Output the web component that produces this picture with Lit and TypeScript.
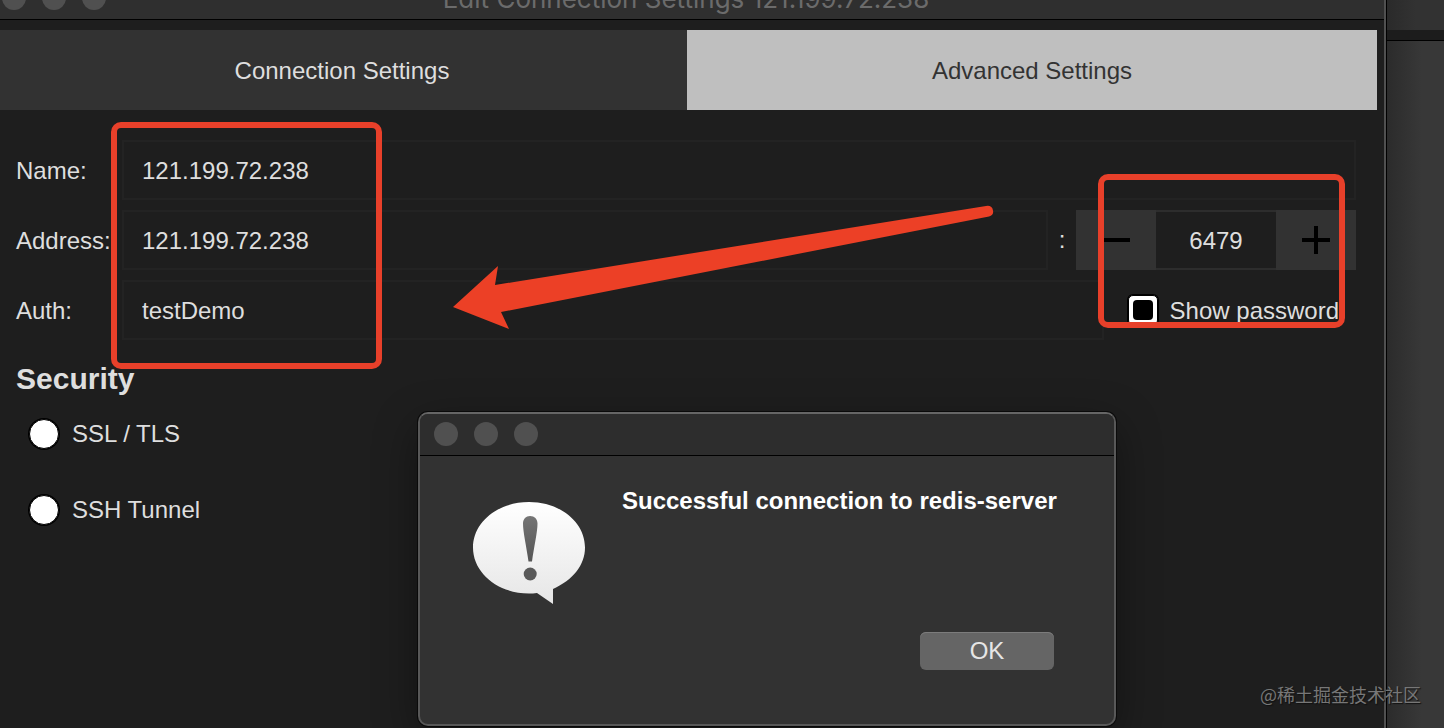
import { LitElement, html, css } from "lit";
import { customElement, property, state } from "lit/decorators.js";

@customElement("window-dots")
export class WindowDots extends LitElement {
  static styles = css`
    :host {
      display: flex;
      gap: 16px;
    }
    .dot {
      width: 24px;
      height: 24px;
      border-radius: 50%;
      background: #505050;
    }
  `;

  render() {
    return html`<span class="dot"></span><span class="dot"></span><span class="dot"></span>`;
  }
}

@customElement("message-dialog")
export class MessageDialog extends LitElement {
  @property() message = "";

  static styles = css`
    :host {
      display: block;
      box-sizing: border-box;
      border: 2px solid #585858;
      border-top-color: #666;
      border-radius: 10px;
      background: #323232;
      box-shadow: 0 0 0 1px #0a0a0a, 0 14px 44px rgba(0, 0, 0, 0.4);
      overflow: hidden;
    }
    .bar {
      display: flex;
      align-items: center;
      height: 40px;
      padding: 0 14px 1px;
      background: #2d2d2d;
      border-bottom: 1px solid #000;
    }
    .body {
      display: flex;
      gap: 36px;
      padding: 30px 60px 54px 52px;
    }
    .icon {
      flex: none;
      width: 114px;
      height: 104px;
      margin-top: 15px;
    }
    .content {
      flex: 1;
      min-width: 0;
      display: flex;
      flex-direction: column;
      justify-content: space-between;
      align-items: flex-end;
      height: 184px;
    }
    .message {
      align-self: flex-start;
      margin: 0;
      font-size: 24px;
      line-height: 30px;
      font-weight: 700;
      color: #fff;
      white-space: nowrap;
    }
    .ok {
      width: 134px;
      height: 38px;
      padding: 0;
      border: 0;
      border-radius: 6px;
      background: #656565;
      box-shadow: inset 0 1px 0 #7c7c7c;
      color: #e6e6e6;
      font: inherit;
      font-size: 24px;
    }
  `;

  render() {
    return html`
      <div class="bar"><window-dots></window-dots></div>
      <div class="body">
        <svg class="icon" viewBox="0 0 114 104" aria-hidden="true">
          <defs>
            <linearGradient id="bubble" x1="0" y1="0" x2="0" y2="1">
              <stop offset="0" stop-color="#ffffff" />
              <stop offset="1" stop-color="#e6e6e6" />
            </linearGradient>
            <linearGradient id="mark" x1="0" y1="0" x2="0" y2="1">
              <stop offset="0" stop-color="#757575" />
              <stop offset="1" stop-color="#555555" />
            </linearGradient>
          </defs>
          <path
            fill="url(#bubble)"
            d="M57 1C88 1 113 21 113 46.500C113 64 101 79 81 88V103L65 92C62 92.500 60 92.500 57 92.500C26 92.500 1 72 1 46.500C1 21 26 1 57 1Z"
          />
          <path
            fill="url(#mark)"
            d="M58 15C62.500 15 65.500 18 65.500 22.500C65.500 31 62 46 60 60.500H56.500C54.500 46 51 31 51 22.500C51 18 54 15 58 15Z"
          />
          <circle cx="58.200" cy="73" r="6.500" fill="#5a5a5a" />
        </svg>
        <div class="content">
          <p class="message">${this.message}</p>
          <button class="ok" type="button">OK</button>
        </div>
      </div>
    `;
  }
}

@customElement("app-root")
export class AppRoot extends LitElement {
  @state() private host = "121.199.72.238";
  @state() private port = 6479;

  static styles = css`
    :host {
      position: relative;
      display: grid;
      grid-template-columns: 1fr 58px;
      min-height: 100vh;
      overflow: hidden;
      background: #1e1e1e;
      color: #dedede;
      font-family: "Liberation Sans", Arial, sans-serif;
      font-size: 24px;
      line-height: 30px;
    }
    .window {
      box-sizing: border-box;
      border-right: 2px solid #505050;
      box-shadow: 1px 0 0 #000;
      z-index: 1;
      min-width: 0;
    }
    .titlebar {
      display: grid;
      grid-template-columns: 1fr auto 1fr;
      grid-template-rows: 19px;
      align-items: end;
      padding: 0 14px 0 2px;
      border-bottom: 1px solid #000;
      background: #2f2f2f;
      overflow: hidden;
    }
    .titlebar window-dots {
      padding-bottom: 9px;
    }
    .title {
      margin: 0;
      padding-bottom: 4px;
      font-family: Inter, sans-serif;
      font-size: 26px;
      line-height: 32px;
      font-weight: 400;
      color: #6b6b6b;
      white-space: nowrap;
    }
    .tabs {
      display: grid;
      grid-template-columns: 1fr 1fr;
      margin: 10px 7px 0 -3px;
    }
    .tab {
      height: 80px;
      padding: 2px 0 0;
      border: 0;
      background: #bfbfbf;
      color: #333;
      font: inherit;
    }
    .tab[aria-selected="true"] {
      background: #323232;
      color: #dedede;
    }
    .form {
      display: grid;
      grid-template-columns: 106px 1fr;
      row-gap: 10px;
      align-items: center;
      padding: 30px 28px 0 16px;
    }
    .caption {
      padding-top: 2px;
    }
    .row {
      display: flex;
      align-items: center;
    }
    .field {
      box-sizing: border-box;
      flex: 1;
      min-width: 0;
      width: 100%;
      height: 60px;
      padding: 2px 18px 0;
      border: 2px solid #232323;
      background: #1e1e1e;
      color: #dedede;
      font: inherit;
      outline: none;
    }
    .colon {
      width: 28px;
      text-align: center;
    }
    .stepper {
      display: grid;
      grid-template-columns: 80px 120px 80px;
      height: 60px;
      background: #323232;
    }
    .step {
      display: grid;
      place-items: center;
      padding: 0;
      border: 0;
      background: none;
    }
    .glyph {
      width: 28px;
      height: 28px;
    }
    .port {
      box-sizing: border-box;
      width: 100%;
      margin: 0;
      padding: 2px 0 0;
      border: solid #2d2d2d;
      border-width: 2px 0;
      background: #1e1e1e;
      color: #dedede;
      font: inherit;
      text-align: center;
      outline: none;
    }
    .reveal {
      display: flex;
      align-items: center;
      gap: 12px;
      padding: 0 17px 0 24px;
      white-space: nowrap;
    }
    .check {
      appearance: none;
      display: grid;
      place-items: center;
      box-sizing: border-box;
      width: 30px;
      height: 30px;
      margin: 0;
      border: 1px solid #000;
      border-radius: 5px;
      background: #fff;
      box-shadow: 0 0 0 1px #000;
    }
    .check::before {
      content: "";
      width: 20px;
      height: 20px;
      border-radius: 4px;
      background: #000;
    }
    .heading {
      margin: 20px 16px 0;
      font-size: 30px;
      line-height: 38px;
      font-weight: 700;
    }
    .options {
      display: grid;
      row-gap: 46px;
      justify-items: start;
      padding: 21px 29px;
    }
    .option {
      display: flex;
      align-items: center;
      gap: 13px;
    }
    .radio {
      appearance: none;
      box-sizing: border-box;
      width: 30px;
      height: 30px;
      margin: 0;
      border: 1px solid #000;
      border-radius: 50%;
      background: #fff;
      box-shadow: 0 0 0 1px #000;
    }
    .behind {
      display: grid;
      grid-template-rows: 30px 10px 1fr;
      background: #1c1c1c;
    }
    .behind-bar {
      background: linear-gradient(90deg, #2a2a2a, #323232 30px);
    }
    .behind-body {
      grid-row: 3;
      border-top: 1px solid #000;
      background: linear-gradient(90deg, #2b2b2b, #383838 36px);
    }
    .dialog {
      position: absolute;
      z-index: 2;
      left: 418px;
      top: 412px;
      width: 698px;
    }
    .mark {
      position: absolute;
      z-index: 3;
      box-sizing: border-box;
      border: 6px solid #e8402a;
      border-radius: 10px;
      pointer-events: none;
    }
    .mark-fields {
      left: 111px;
      top: 122px;
      width: 271px;
      height: 247px;
    }
    .mark-port {
      right: 99px;
      top: 174px;
      width: 247px;
      height: 154px;
    }
    .arrow {
      position: absolute;
      z-index: 3;
      left: 450px;
      top: 200px;
      width: 550px;
      height: 135px;
      pointer-events: none;
    }
    .watermark {
      position: absolute;
      z-index: 4;
      right: 23px;
      bottom: 21px;
      font-family: "Noto Sans CJK SC", sans-serif;
      font-size: 18px;
      line-height: 26px;
      color: #777;
      text-shadow: 1px 1px 1px #111;
    }
  `;

  render() {
    return html`
      <main class="window">
        <header class="titlebar">
          <window-dots></window-dots>
          <h1 class="title">Edit Connection Settings ${this.host}</h1>
        </header>
        <div class="tabs" role="tablist">
          <button class="tab" type="button" role="tab" aria-selected="true">Connection Settings</button>
          <button class="tab" type="button" role="tab" aria-selected="false">Advanced Settings</button>
        </div>
        <form class="form">
          <label class="caption" for="name">Name:</label>
          <input class="field" id="name" type="text" .value=${this.host} />
          <label class="caption" for="address">Address:</label>
          <div class="row">
            <input class="field" id="address" type="text" .value=${this.host} />
            <span class="colon">:</span>
            <div class="stepper">
              <button class="step" type="button" aria-label="Decrease port" @click=${() => this.port--}>
                <svg class="glyph" viewBox="0 0 28 28"><path d="M0 14H28" stroke="#000" stroke-width="4" /></svg>
              </button>
              <input class="port" type="text" inputmode="numeric" aria-label="Port" .value=${String(this.port)} />
              <button class="step" type="button" aria-label="Increase port" @click=${() => this.port++}>
                <svg class="glyph" viewBox="0 0 28 28"><path d="M0 14H28M14 0V28" stroke="#000" stroke-width="4" /></svg>
              </button>
            </div>
          </div>
          <label class="caption" for="auth">Auth:</label>
          <div class="row">
            <input class="field" id="auth" type="text" .value=${"testDemo"} />
            <label class="reveal">
              <input class="check" type="checkbox" />
              <span class="caption">Show password</span>
            </label>
          </div>
        </form>
        <h2 class="heading">Security</h2>
        <div class="options">
          <label class="option"><input class="radio" type="radio" name="security" />SSL / TLS</label>
          <label class="option"><input class="radio" type="radio" name="security" />SSH Tunnel</label>
        </div>
      </main>
      <div class="behind">
        <div class="behind-bar"></div>
        <div class="behind-body"></div>
      </div>
      <message-dialog
        class="dialog"
        role="dialog"
        aria-label="Connection result"
        .message=${"Successful connection to redis-server"}
      ></message-dialog>
      <div class="mark mark-fields"></div>
      <div class="mark mark-port"></div>
      <svg class="arrow" viewBox="450 200 550 135" aria-hidden="true">
        <path
          fill="#ec4026"
          d="M453 307L498 266L495 285L986 206Q992 205 993 210.500Q994 215 989 216.500L501 312L509 329Z"
        />
      </svg>
      <span class="watermark">@稀土掘金技术社区</span>
    `;
  }
}
